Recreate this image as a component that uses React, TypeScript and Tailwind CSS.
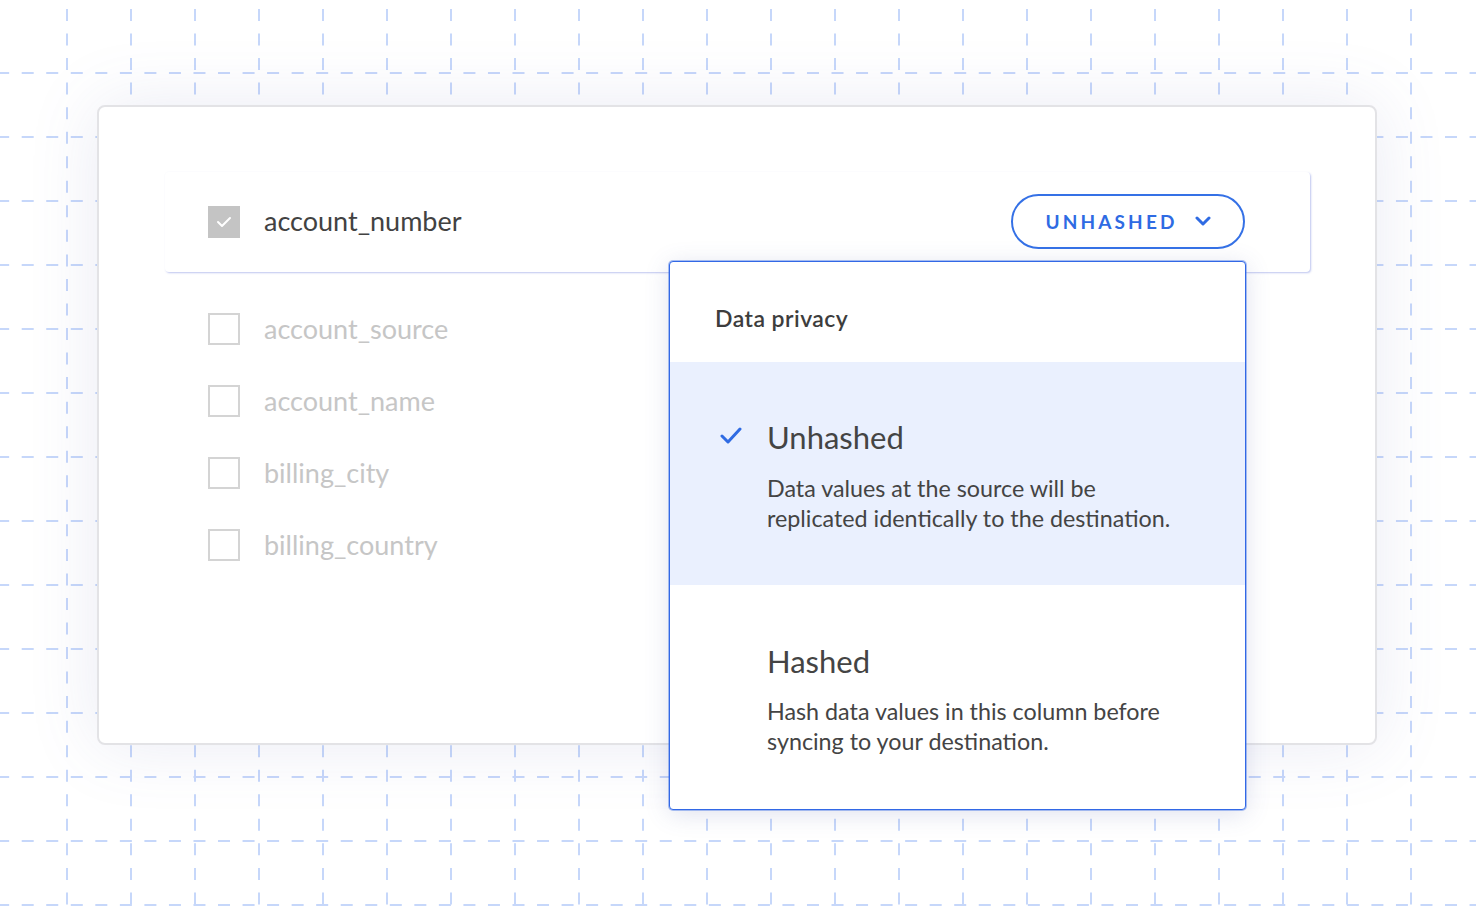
import React from "react";

const vLines = Array.from({ length: 22 }, (_, i) => 67 + i * 64);
const hLines = Array.from({ length: 14 }, (_, i) => 73 + i * 64);

function Grid() {
  return (
    <svg
      className="absolute inset-0 pointer-events-none"
      width="1476"
      height="913"
      viewBox="0 0 1476 913"
    >
      {vLines.map((x) => (
        <line
          key={"v" + x}
          x1={x}
          y1={0}
          x2={x}
          y2={913}
          stroke="#c6d7fa"
          strokeWidth="2"
          strokeDasharray="12 12.54"
          strokeDashoffset={24.54 - 9}
        />
      ))}
      {hLines.map((y) => (
        <line
          key={"h" + y}
          x1={0}
          y1={y}
          x2={1476}
          y2={y}
          stroke="#c6d7fa"
          strokeWidth="2"
          strokeDasharray="12 12.54"
          strokeDashoffset={24.54 - 21.7}
        />
      ))}
    </svg>
  );
}

function CheckedBox() {
  return (
    <div className="w-8 h-8 bg-[#c4c4c4] flex items-center justify-center shrink-0">
      <svg width="16" height="12" viewBox="0 0 16 12" fill="none">
        <polyline points="2,6 6,10 14,2" stroke="#ffffff" strokeWidth="2" strokeLinecap="round" strokeLinejoin="round" />
      </svg>
    </div>
  );
}

function EmptyBox() {
  return <div className="w-8 h-8 border-2 border-[#d4d4d4] shrink-0" />;
}

const fields = ["account_source", "account_name", "billing_city", "billing_country"];

export default function App() {
  return (
    <div
      className="relative w-[1476px] h-[913px] overflow-hidden bg-white"
      style={{ fontFamily: 'Lato, "Noto Sans", sans-serif' }}
    >
      <Grid />
      <div className="relative pl-[97px] pt-[105px]">
        <div className="relative w-[1280px] h-[640px] bg-white border-2 border-[#e3e3e6] rounded-[8px] shadow-[0_0_70px_rgba(90,100,170,0.13)] pt-[65px] pl-[66px]">
          {/* Active row */}
          <div className="w-[1145px] h-[100px] rounded-[4px] bg-white shadow-[1px_1px_2px_rgba(70,90,210,0.35)] flex items-center justify-between pl-[43px] pr-[65px]">
            <div className="flex items-center gap-6">
              <CheckedBox />
              <span className="text-[27px] text-[#424242] leading-none mt-[-3px]">account_number</span>
            </div>
            <div className="w-[234px] h-[55px] rounded-full border-2 border-[#3571e6] flex items-center justify-center gap-[17px] mt-[-2px]">
              <span className="text-[19px] font-bold tracking-[0.165em] text-[#2f6be3] leading-none">UNHASHED</span>
              <svg width="16" height="10" viewBox="0 0 16 10" fill="none">
                <polyline points="2,2 8,8 14,2" stroke="#2f6be3" strokeWidth="3" strokeLinecap="round" strokeLinejoin="round" />
              </svg>
            </div>
          </div>

          {/* Other fields */}
          <div className="flex flex-col pl-[43px] mt-[21px]">
            {fields.map((f) => (
              <div key={f} className="h-[72px] flex items-center gap-6">
                <EmptyBox />
                <span className="text-[27px] text-[#c6c6c6] leading-none mt-[-2px]">{f}</span>
              </div>
            ))}
          </div>

          {/* Dropdown */}
          <div className="absolute left-[570px] top-[154px] w-[577px] h-[549px] bg-white border border-[#3268e6] ring-1 ring-[#3268e6]/40 rounded-[4px] shadow-[0_4px_24px_rgba(80,90,160,0.18)] flex flex-col overflow-hidden">
            <div className="h-[100px] pl-[45px] pt-[41px]">
              <span className="text-[23px] font-semibold tracking-[0.02em] text-[#3d3d3d] leading-[30px]">Data privacy</span>
            </div>
            <div className="h-[223px] bg-[#eaf0fe] flex pt-[55px]">
              <div className="w-[97px] flex justify-center pt-[10px] pl-[25px]">
                <svg width="22" height="18" viewBox="0 0 22 18" fill="none">
                  <polyline points="2,9 8,15 20,2" stroke="#2f6be3" strokeWidth="3" strokeLinecap="round" strokeLinejoin="round" />
                </svg>
              </div>
              <div className="flex flex-col">
                <span className="text-[31px] text-[#444] leading-[40px]">Unhashed</span>
                <p className="mt-[16px] text-[23.3px] text-[#444] leading-[30px]">
                  Data values at the source will be
                  <br />
                  replicated identically to the destination.
                </p>
              </div>
            </div>
            <div className="flex-1 flex pt-[56px] pl-[97px]">
              <div className="flex flex-col">
                <span className="text-[31px] text-[#444] leading-[40px]">Hashed</span>
                <p className="mt-[15px] text-[23.3px] text-[#444] leading-[30px]">
                  Hash data values in this column before
                  <br />
                  syncing to your destination.
                </p>
              </div>
            </div>
          </div>
        </div>
      </div>
    </div>
  );
}
